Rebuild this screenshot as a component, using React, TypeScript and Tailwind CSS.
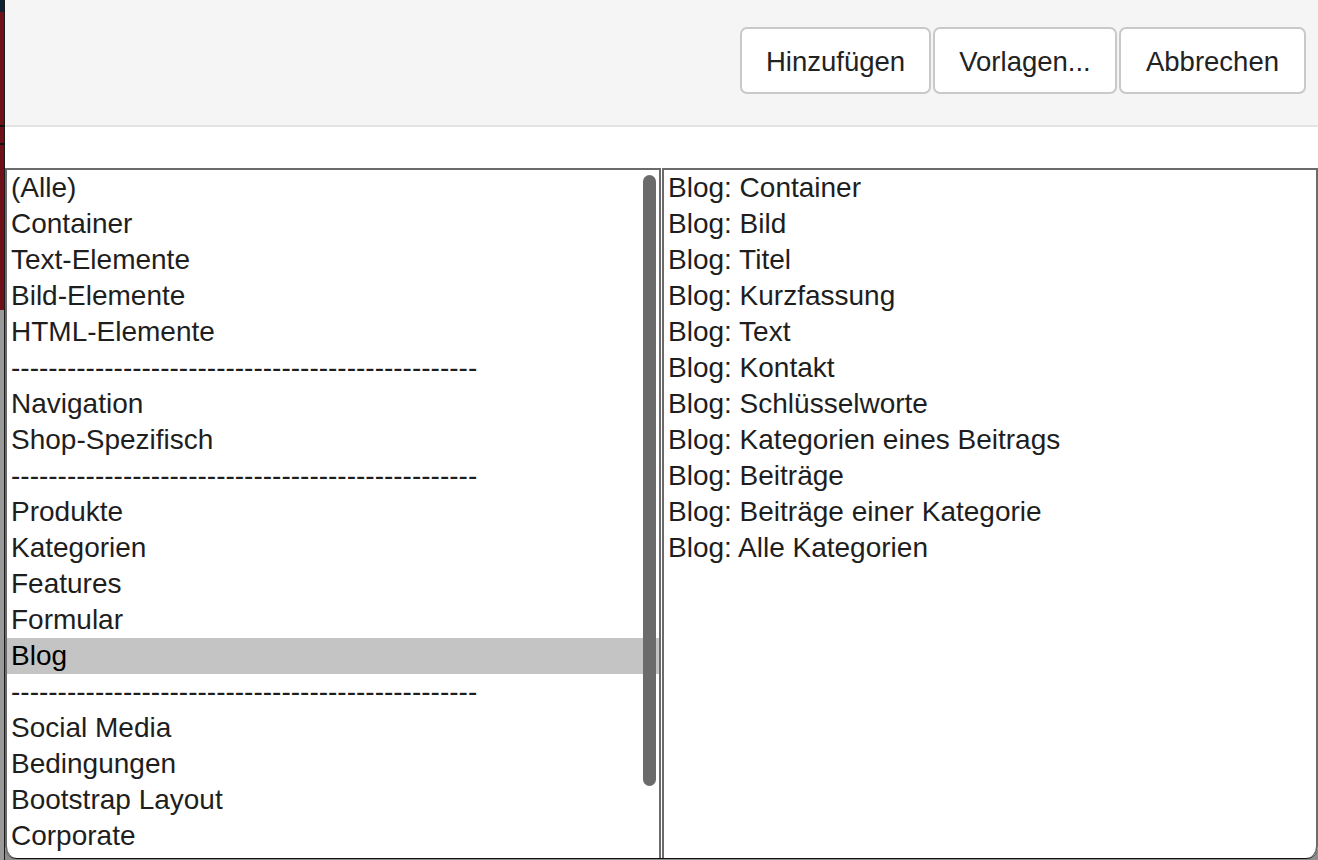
import React from "react";

const SEP = "-".repeat(50);

const categories = [
  "(Alle)",
  "Container",
  "Text-Elemente",
  "Bild-Elemente",
  "HTML-Elemente",
  SEP,
  "Navigation",
  "Shop-Spezifisch",
  SEP,
  "Produkte",
  "Kategorien",
  "Features",
  "Formular",
  "Blog",
  SEP,
  "Social Media",
  "Bedingungen",
  "Bootstrap Layout",
  "Corporate",
];

const blogItems = [
  "Blog: Container",
  "Blog: Bild",
  "Blog: Titel",
  "Blog: Kurzfassung",
  "Blog: Text",
  "Blog: Kontakt",
  "Blog: Schlüsselworte",
  "Blog: Kategorien eines Beitrags",
  "Blog: Beiträge",
  "Blog: Beiträge einer Kategorie",
  "Blog: Alle Kategorien",
];

const font = { fontFamily: '"Liberation Sans", Arial, Helvetica, sans-serif' };

function Button({ label, width }: { label: string; width: string }) {
  return (
    <button
      className={`h-[67px] ${width} rounded-[7px] border-2 border-[#c9c9c9] bg-white pt-[3px] text-[27.5px] text-[#222] flex items-center justify-center`}
    >
      {label}
    </button>
  );
}

export default function App() {
  const selected = "Blog";
  return (
    <div
      className="w-[1318px] h-[860px] flex bg-[#8e8e8e] overflow-hidden"
      style={font}
    >
      {/* backdrop sliver behind the dialog */}
      <div className="w-[4px] h-full flex flex-col">
        <div className="h-[12px] bg-[#0f2233]" />
        <div className="h-[113px] bg-[#6e1118]" />
        <div className="h-[2px] bg-[#111]" />
        <div className="h-[16px] bg-[#6e1118]" />
        <div className="h-[2px] bg-[#111]" />
        <div className="h-[165px] bg-[#6e1118]" />
        <div className="flex-1 bg-[#9a9a9a]" />
      </div>
      <div className="w-[1px] h-full bg-[#1a1a1a]" />

      {/* dialog */}
      <div className="flex-1 h-[859px] flex flex-col bg-white rounded-b-[12px] overflow-hidden border-b border-[#111]">
        <div className="h-[127px] shrink-0 bg-[#f5f5f5] border-b-2 border-[#e4e4e4] flex justify-end items-start pt-[27px] pr-[12px] gap-[2px]">
          <Button label="Hinzufügen" width="w-[191px]" />
          <Button label="Vorlagen..." width="w-[184px]" />
          <Button label="Abbrechen" width="w-[187px]" />
        </div>

        <div className="h-[41px] shrink-0" />

        <div className="flex-1 flex gap-[1px] min-h-0">
          {/* category list */}
          <div className="relative w-[656px] h-full border-2 border-[#6b6b6b] border-b-0 rounded-bl-[12px] overflow-hidden">
            {categories.map((c, i) => (
              <div
                key={i}
                className={`h-[36px] leading-[36px] pl-[4px] text-[28px] text-[#1e1e1e] whitespace-nowrap ${
                  c === selected ? "bg-[#c4c4c4] text-black" : ""
                }`}
              >
                {c}
              </div>
            ))}
            <div className="absolute right-[3px] top-[5px] w-[13px] h-[611px] rounded-full bg-[#6b6b6b]" />
          </div>

          {/* element list */}
          <div className="w-[656px] h-full border-2 border-[#6b6b6b] border-b-0 rounded-br-[12px] overflow-hidden">
            {blogItems.map((b) => (
              <div
                key={b}
                className="h-[36px] leading-[36px] pl-[4px] text-[28px] text-[#1e1e1e] whitespace-nowrap"
              >
                {b}
              </div>
            ))}
          </div>
        </div>
      </div>
    </div>
  );
}
